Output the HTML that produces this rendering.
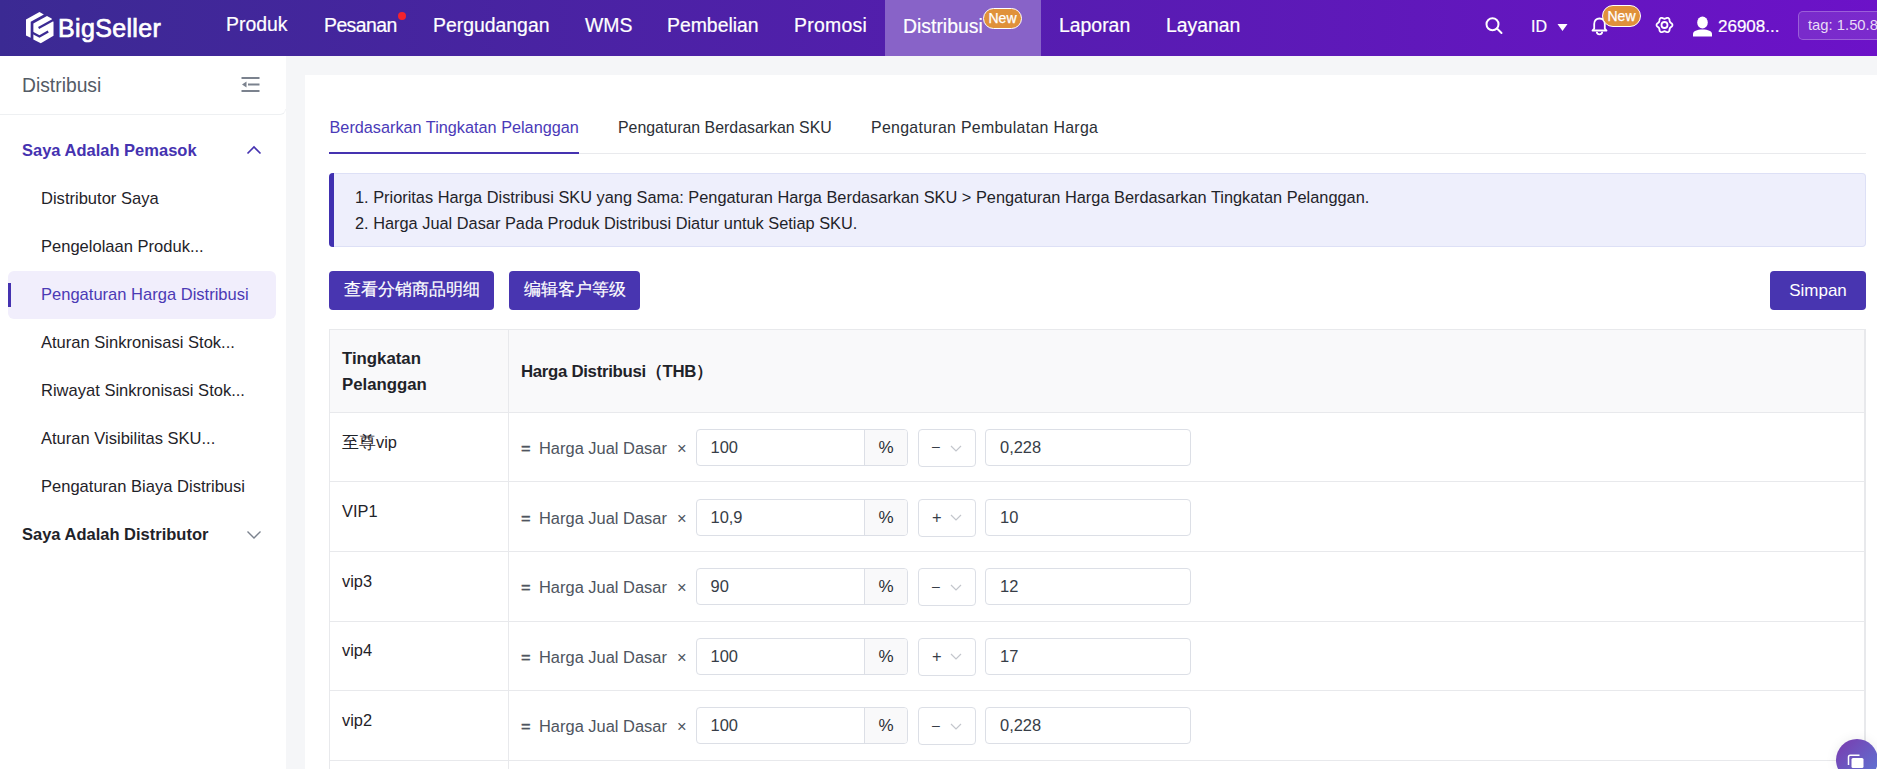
<!DOCTYPE html>
<html><head><meta charset="utf-8">
<style>
*{box-sizing:border-box;margin:0;padding:0}
html,body{width:1877px;height:769px;overflow:hidden;background:#f5f6f8;font-family:"Liberation Sans",sans-serif;}
.a{position:absolute;white-space:nowrap;line-height:1}
#hdr{position:absolute;left:0;top:0;width:1877px;height:56px;background:linear-gradient(90deg,#3b2a93 0%,#6c12c8 100%);}
#hdr .n{color:#fff;font-size:19.4px;-webkit-text-stroke:0.2px #fff}
#side{position:absolute;left:0;top:56px;width:286px;height:713px;background:#fff;}
#card{position:absolute;left:305px;top:75px;width:1572px;height:694px;background:#fff;}
.si{color:#1f2329;font-size:16.55px}
.tb{font-size:15.9px;color:#2b2f36}
.inf{font-size:16.35px;color:#1f2329}
.btn{height:39px;border-radius:4px;background:#4835b0;color:#fff;font-size:17px;line-height:39px;text-align:center}
.hl{left:330px;width:1535px;height:1px;background:#e8e9ec}
.th{font-size:16.8px;font-weight:700;color:#1f2329}
.td{font-size:16.4px;color:#1f2329}
.gx{font-size:16.45px;color:#4e5560}
.iv{font-size:16.45px;color:#373d47}
.inp{height:37px;border:1px solid #dcdfe6;border-radius:4px;background:#fff}
.addon{position:absolute;right:0;top:0;width:43px;height:35px;background:#f9f9fa;border-left:1px solid #dcdfe6;border-radius:0 3px 3px 0;text-align:center;line-height:35px;font-size:17px;color:#2b2f36}
</style></head><body>
<div id="hdr">
  <svg class="a" style="left:24px;top:10px" width="32" height="34" viewBox="0 0 724 769">
    <path fill="#fff" d="M45,215 L350,45 L450,100 L152,268 L150,630 L45,575 Z"/>
    <path fill="#fff" d="M212,305 L520,135 L625,192 L668,272 L668,580 L380,750 L212,665 Z"/>
    <g stroke="#3b2a93" stroke-width="52" fill="none">
      <path d="M330,405 L720,195"/>
      <path d="M180,510 L350,600 L548,488"/>
    </g>
  </svg>
  <span class="a" style="left:58px;top:16px;font-size:25px;color:#fff;-webkit-text-stroke:0.7px #fff;letter-spacing:0.35px">BigSeller</span>
  <span class="a n" style="left:226px;top:15px">Produk</span>
  <span class="a n" style="left:324px;top:16px;letter-spacing:-0.55px">Pesanan</span>
  <div class="a" style="left:398px;top:12px;width:8px;height:8px;border-radius:50%;background:#f5222d"></div>
  <span class="a n" style="left:433px;top:16px">Pergudangan</span>
  <span class="a n" style="left:585px;top:16px">WMS</span>
  <span class="a n" style="left:667px;top:16px">Pembelian</span>
  <span class="a n" style="left:794px;top:16px;letter-spacing:0.3px">Promosi</span>
  <div class="a" style="left:885px;top:0;width:156px;height:56px;background:#8863c8"></div>
  <span class="a n" style="left:903px;top:16.5px">Distribusi</span>
  <div class="a" style="left:983px;top:8px;width:39px;height:21px;border-radius:11px;background:#e0913a;border:1px solid #fff;color:#fff;font-size:14px;line-height:19px;text-align:center;-webkit-text-stroke:0.25px #fff">New</div>
  <span class="a n" style="left:1059px;top:16px">Laporan</span>
  <span class="a n" style="left:1166px;top:16px">Layanan</span>

  <svg class="a" style="left:1484px;top:16px" width="20" height="20" viewBox="0 0 20 20"><circle cx="8.5" cy="8.2" r="6" stroke="#fff" stroke-width="2" fill="none"/><path d="M13,12.5 L17.5,17" stroke="#fff" stroke-width="2" stroke-linecap="round"/></svg>
  <span class="a" style="left:1531px;top:19px;font-size:16px;color:#fff;-webkit-text-stroke:0.2px #fff">ID</span>
  <svg class="a" style="left:1557px;top:23px" width="11" height="9" viewBox="0 0 11 9"><path d="M0.5,1 L10.5,1 L5.5,8 Z" fill="#fff"/></svg>
  <svg class="a" style="left:1591px;top:17px" width="17" height="19" viewBox="0 0 17 19"><path d="M1.5,13.5 L3.2,11.5 L3.2,7 C3.2,3.5 5.3,1.5 8.5,1.5 C11.7,1.5 13.8,3.5 13.8,7 L13.8,11.5 L15.5,13.5 Z" stroke="#fff" stroke-width="1.8" fill="none" stroke-linejoin="round"/><path d="M5.8,14.8 C5.8,18.2 11.2,18.2 11.2,14.8" stroke="#fff" stroke-width="1.8" fill="none"/></svg>
  <div class="a" style="left:1602px;top:5px;width:39px;height:22px;border-radius:11px;background:#e0913a;border:1px solid #fff;color:#fff;font-size:14px;line-height:20px;text-align:center;-webkit-text-stroke:0.25px #fff">New</div>
  <svg class="a" style="left:1655px;top:16px" width="19" height="18" viewBox="0 0 19 18"><path d="M17.45,9.00 L17.31,9.68 L16.91,10.31 L16.36,10.84 L15.77,11.28 L15.27,11.69 L14.91,12.12 L14.71,12.65 L14.61,13.29 L14.52,14.02 L14.34,14.76 L13.99,15.42 L13.48,15.88 L12.81,16.10 L12.07,16.07 L11.34,15.86 L10.66,15.57 L10.05,15.34 L9.50,15.25 L8.95,15.34 L8.34,15.57 L7.66,15.86 L6.93,16.07 L6.19,16.10 L5.53,15.88 L5.01,15.42 L4.66,14.76 L4.48,14.02 L4.39,13.29 L4.29,12.65 L4.09,12.13 L3.73,11.69 L3.23,11.28 L2.64,10.84 L2.09,10.31 L1.69,9.68 L1.55,9.00 L1.69,8.32 L2.09,7.69 L2.64,7.16 L3.23,6.72 L3.73,6.31 L4.09,5.87 L4.29,5.35 L4.39,4.71 L4.48,3.98 L4.66,3.24 L5.01,2.58 L5.52,2.12 L6.19,1.90 L6.93,1.93 L7.66,2.14 L8.34,2.43 L8.95,2.66 L9.50,2.75 L10.05,2.66 L10.66,2.43 L11.34,2.14 L12.07,1.93 L12.81,1.90 L13.47,2.12 L13.99,2.58 L14.34,3.24 L14.52,3.98 L14.61,4.71 L14.71,5.35 L14.91,5.88 L15.27,6.31 L15.77,6.72 L16.36,7.16 L16.91,7.69 L17.31,8.32Z" stroke="#fff" stroke-width="1.8" fill="none" stroke-linejoin="round"/><circle cx="9.5" cy="9" r="3" stroke="#fff" stroke-width="1.8" fill="none"/></svg>
  <svg class="a" style="left:1692px;top:16px" width="22" height="21" viewBox="0 0 22 21"><ellipse cx="10.5" cy="6.5" rx="5.3" ry="6" fill="#fff"/><path d="M1,20.5 L1,18 C1,15 5,13.5 10.5,13.5 C16,13.5 20,15 20,18 L20,20.5 Z" fill="#fff"/></svg>
  <span class="a" style="left:1718px;top:18px;font-size:17px;color:#fff;-webkit-text-stroke:0.2px #fff">26908...</span>
  <div class="a" style="left:1798px;top:11px;width:100px;height:29px;border-radius:5px;background:rgba(255,255,255,0.1);border:1px solid rgba(255,255,255,0.25)"></div>
  <span class="a" style="left:1808px;top:17.5px;font-size:14.8px;color:#e8dcf6">tag: 1.50.8</span>
</div>

<div id="side">
  <span class="a" style="left:22px;top:19.5px;font-size:19.3px;color:#545b66">Distribusi</span>
  <svg class="a" style="left:241px;top:21px" width="19" height="16" viewBox="0 0 19 16"><path d="M0.5,1 H18.5 M7,7.5 H18.5 M0.5,14 H18.5" stroke="#7b828e" stroke-width="2"/><path d="M1,7.5 L5.5,4.5 L5.5,10.5 Z" fill="#7b828e"/></svg>
  <div class="a" style="left:-2px;top:53px;width:288px;height:6px;border-bottom:1px solid #eef0f2;border-right:1px solid #f3f4f6;border-radius:0 0 6px 0"></div>
  <span class="a" style="left:22px;top:86px;font-size:16.5px;font-weight:700;color:#4532b0">Saya Adalah Pemasok</span>
  <svg class="a" style="left:246px;top:89px" width="16" height="10" viewBox="0 0 16 10"><path d="M1.5,8.5 L8,2 L14.5,8.5" stroke="#4532b0" stroke-width="1.6" fill="none"/></svg>
  <span class="a si" style="left:41px;top:135px">Distributor Saya</span>
  <span class="a si" style="left:41px;top:183px">Pengelolaan Produk...</span>
  <div class="a" style="left:8px;top:215px;width:268px;height:48px;border-radius:6px;background:#f1eefc"></div>
  <div class="a" style="left:8px;top:227px;width:3px;height:24px;background:#4532b0"></div>
  <span class="a si" style="left:41px;top:231px;color:#4b3ab5">Pengaturan Harga Distribusi</span>
  <span class="a si" style="left:41px;top:279px">Aturan Sinkronisasi Stok...</span>
  <span class="a si" style="left:41px;top:327px">Riwayat Sinkronisasi Stok...</span>
  <span class="a si" style="left:41px;top:375px">Aturan Visibilitas SKU...</span>
  <span class="a si" style="left:41px;top:423px">Pengaturan Biaya Distribusi</span>
  <span class="a" style="left:22px;top:470px;font-size:16.5px;font-weight:700;color:#1f2329">Saya Adalah Distributor</span>
  <svg class="a" style="left:246px;top:474px" width="16" height="10" viewBox="0 0 16 10"><path d="M1.5,1.5 L8,8 L14.5,1.5" stroke="#7b828e" stroke-width="1.4" fill="none"/></svg>
</div>

<div id="card"></div>
<div id="tabs">
  <span class="a" style="left:329.5px;top:119px;font-size:16.25px;color:#4a3ab8">Berdasarkan Tingkatan Pelanggan</span>
  <span class="a tb" style="left:618px;top:120px">Pengaturan Berdasarkan SKU</span>
  <span class="a tb" style="left:871px;top:120px;letter-spacing:0.3px">Pengaturan Pembulatan Harga</span>
  <div class="a" style="left:329px;top:153px;width:1537px;height:1px;background:#e9eaed"></div>
  <div class="a" style="left:329px;top:152px;width:250px;height:2px;background:#4532b0"></div>
</div>
<div class="a" style="left:329px;top:173px;width:1537px;height:74px;background:#eeeffc;border:1px solid #dde0f6;border-left:none;border-radius:4px"></div>
<div class="a" style="left:329px;top:173px;width:5px;height:74px;background:#4030b0;border-radius:4px 0 0 4px"></div>
<span class="a inf" style="left:355px;top:189px">1. Prioritas Harga Distribusi SKU yang Sama: Pengaturan Harga Berdasarkan SKU &gt; Pengaturan Harga Berdasarkan Tingkatan Pelanggan.</span>
<span class="a inf" style="left:355px;top:215px">2. Harga Jual Dasar Pada Produk Distribusi Diatur untuk Setiap SKU.</span>
<div class="a btn" style="left:329px;top:271px;width:165px;-webkit-text-stroke:0.2px #fff;font-size:16.6px;line-height:38.5px">查看分销商品明细</div>
<div class="a btn" style="left:509px;top:271px;width:131px;-webkit-text-stroke:0.2px #fff;font-size:16.6px;line-height:38.5px">编辑客户等级</div>
<div class="a btn" style="left:1770px;top:271px;width:96px;font-size:17px">Simpan</div>

<div id="tbl">
  <div class="a" style="left:329px;top:329px;width:1537px;height:440px;border:1px solid #e8e9ec;border-right-width:2px;border-bottom:none"></div>
  <div class="a" style="left:330px;top:330px;width:1534px;height:82px;background:#f9f9fa"></div>
  <div class="a hl" style="top:412px"></div>
  <div class="a hl" style="top:481px"></div>
  <div class="a hl" style="top:551px"></div>
  <div class="a hl" style="top:621px"></div>
  <div class="a hl" style="top:690px"></div>
  <div class="a hl" style="top:760px"></div>
  <div class="a" style="left:508px;top:330px;width:1px;height:439px;background:#e8e9ec"></div>
  <span class="a th" style="left:342px;top:351px">Tingkatan</span>
  <span class="a th" style="left:342px;top:377px">Pelanggan</span>
  <span class="a th" style="left:521px;top:364px;letter-spacing:-0.3px">Harga Distribusi（THB）</span>
  <span class="a td" style="left:342px;top:433.5px"><span style="font-size:17px">至尊</span>vip</span>
  <span class="a gx" style="left:521px;top:440.0px;-webkit-text-stroke:0.35px #4e5560">=</span>
  <span class="a gx" style="left:539px;top:440.0px">Harga Jual Dasar</span>
  <span class="a gx" style="left:677px;top:440.0px">×</span>
  <div class="a inp" style="left:696px;top:429.0px;width:212px"><div class="addon">%</div></div>
  <span class="a iv" style="left:710.5px;top:439.0px">100</span>
  <div class="a inp" style="left:918px;top:429.0px;width:58px;height:38px"></div>
  <span class="a iv" style="left:932px;top:439.3px;font-size:14px;">–</span>
  <svg class="a" style="left:948.5px;top:443.5px" width="14" height="9" viewBox="0 0 14 9"><path d="M2,2 L7,7 L12,2" stroke="#c3c6cc" stroke-width="1.2" fill="none"/></svg>
  <div class="a inp" style="left:985px;top:429.0px;width:206px"></div>
  <span class="a iv" style="left:1000px;top:439.0px">0,228</span>
  <span class="a td" style="left:342px;top:503.1px">VIP1</span>
  <span class="a gx" style="left:521px;top:509.6px;-webkit-text-stroke:0.35px #4e5560">=</span>
  <span class="a gx" style="left:539px;top:509.6px">Harga Jual Dasar</span>
  <span class="a gx" style="left:677px;top:509.6px">×</span>
  <div class="a inp" style="left:696px;top:498.6px;width:212px"><div class="addon">%</div></div>
  <span class="a iv" style="left:710.5px;top:508.6px">10,9</span>
  <div class="a inp" style="left:918px;top:498.6px;width:58px;height:38px"></div>
  <span class="a iv" style="left:932px;top:508.6px;">+</span>
  <svg class="a" style="left:948.5px;top:513.1px" width="14" height="9" viewBox="0 0 14 9"><path d="M2,2 L7,7 L12,2" stroke="#c3c6cc" stroke-width="1.2" fill="none"/></svg>
  <div class="a inp" style="left:985px;top:498.6px;width:206px"></div>
  <span class="a iv" style="left:1000px;top:508.6px">10</span>
  <span class="a td" style="left:342px;top:572.7px">vip3</span>
  <span class="a gx" style="left:521px;top:579.2px;-webkit-text-stroke:0.35px #4e5560">=</span>
  <span class="a gx" style="left:539px;top:579.2px">Harga Jual Dasar</span>
  <span class="a gx" style="left:677px;top:579.2px">×</span>
  <div class="a inp" style="left:696px;top:568.2px;width:212px"><div class="addon">%</div></div>
  <span class="a iv" style="left:710.5px;top:578.2px">90</span>
  <div class="a inp" style="left:918px;top:568.2px;width:58px;height:38px"></div>
  <span class="a iv" style="left:932px;top:578.5px;font-size:14px;">–</span>
  <svg class="a" style="left:948.5px;top:582.7px" width="14" height="9" viewBox="0 0 14 9"><path d="M2,2 L7,7 L12,2" stroke="#c3c6cc" stroke-width="1.2" fill="none"/></svg>
  <div class="a inp" style="left:985px;top:568.2px;width:206px"></div>
  <span class="a iv" style="left:1000px;top:578.2px">12</span>
  <span class="a td" style="left:342px;top:642.3px">vip4</span>
  <span class="a gx" style="left:521px;top:648.8px;-webkit-text-stroke:0.35px #4e5560">=</span>
  <span class="a gx" style="left:539px;top:648.8px">Harga Jual Dasar</span>
  <span class="a gx" style="left:677px;top:648.8px">×</span>
  <div class="a inp" style="left:696px;top:637.8px;width:212px"><div class="addon">%</div></div>
  <span class="a iv" style="left:710.5px;top:647.8px">100</span>
  <div class="a inp" style="left:918px;top:637.8px;width:58px;height:38px"></div>
  <span class="a iv" style="left:932px;top:647.8px;">+</span>
  <svg class="a" style="left:948.5px;top:652.3px" width="14" height="9" viewBox="0 0 14 9"><path d="M2,2 L7,7 L12,2" stroke="#c3c6cc" stroke-width="1.2" fill="none"/></svg>
  <div class="a inp" style="left:985px;top:637.8px;width:206px"></div>
  <span class="a iv" style="left:1000px;top:647.8px">17</span>
  <span class="a td" style="left:342px;top:711.9px">vip2</span>
  <span class="a gx" style="left:521px;top:718.4px;-webkit-text-stroke:0.35px #4e5560">=</span>
  <span class="a gx" style="left:539px;top:718.4px">Harga Jual Dasar</span>
  <span class="a gx" style="left:677px;top:718.4px">×</span>
  <div class="a inp" style="left:696px;top:707.4px;width:212px"><div class="addon">%</div></div>
  <span class="a iv" style="left:710.5px;top:717.4px">100</span>
  <div class="a inp" style="left:918px;top:707.4px;width:58px;height:38px"></div>
  <span class="a iv" style="left:932px;top:717.7px;font-size:14px;">–</span>
  <svg class="a" style="left:948.5px;top:721.9px" width="14" height="9" viewBox="0 0 14 9"><path d="M2,2 L7,7 L12,2" stroke="#c3c6cc" stroke-width="1.2" fill="none"/></svg>
  <div class="a inp" style="left:985px;top:707.4px;width:206px"></div>
  <span class="a iv" style="left:1000px;top:717.4px">0,228</span>
</div>
<div class="a" style="left:1836px;top:739px;width:42px;height:42px;border-radius:50%;background:linear-gradient(135deg,#7b3aae 0%,#5b79d6 100%);box-shadow:0 0 12px rgba(0,0,0,0.08)"></div>
<svg class="a" style="left:1847px;top:754px" width="18" height="15" viewBox="0 0 18 15"><path d="M1.5,11 V3 Q1.5,1.2 3.3,1.2 H12.5" stroke="#fff" stroke-width="1.5" fill="none"/><rect x="4.5" y="4" width="12" height="10" rx="1.5" fill="#fff"/></svg>

</body></html>
